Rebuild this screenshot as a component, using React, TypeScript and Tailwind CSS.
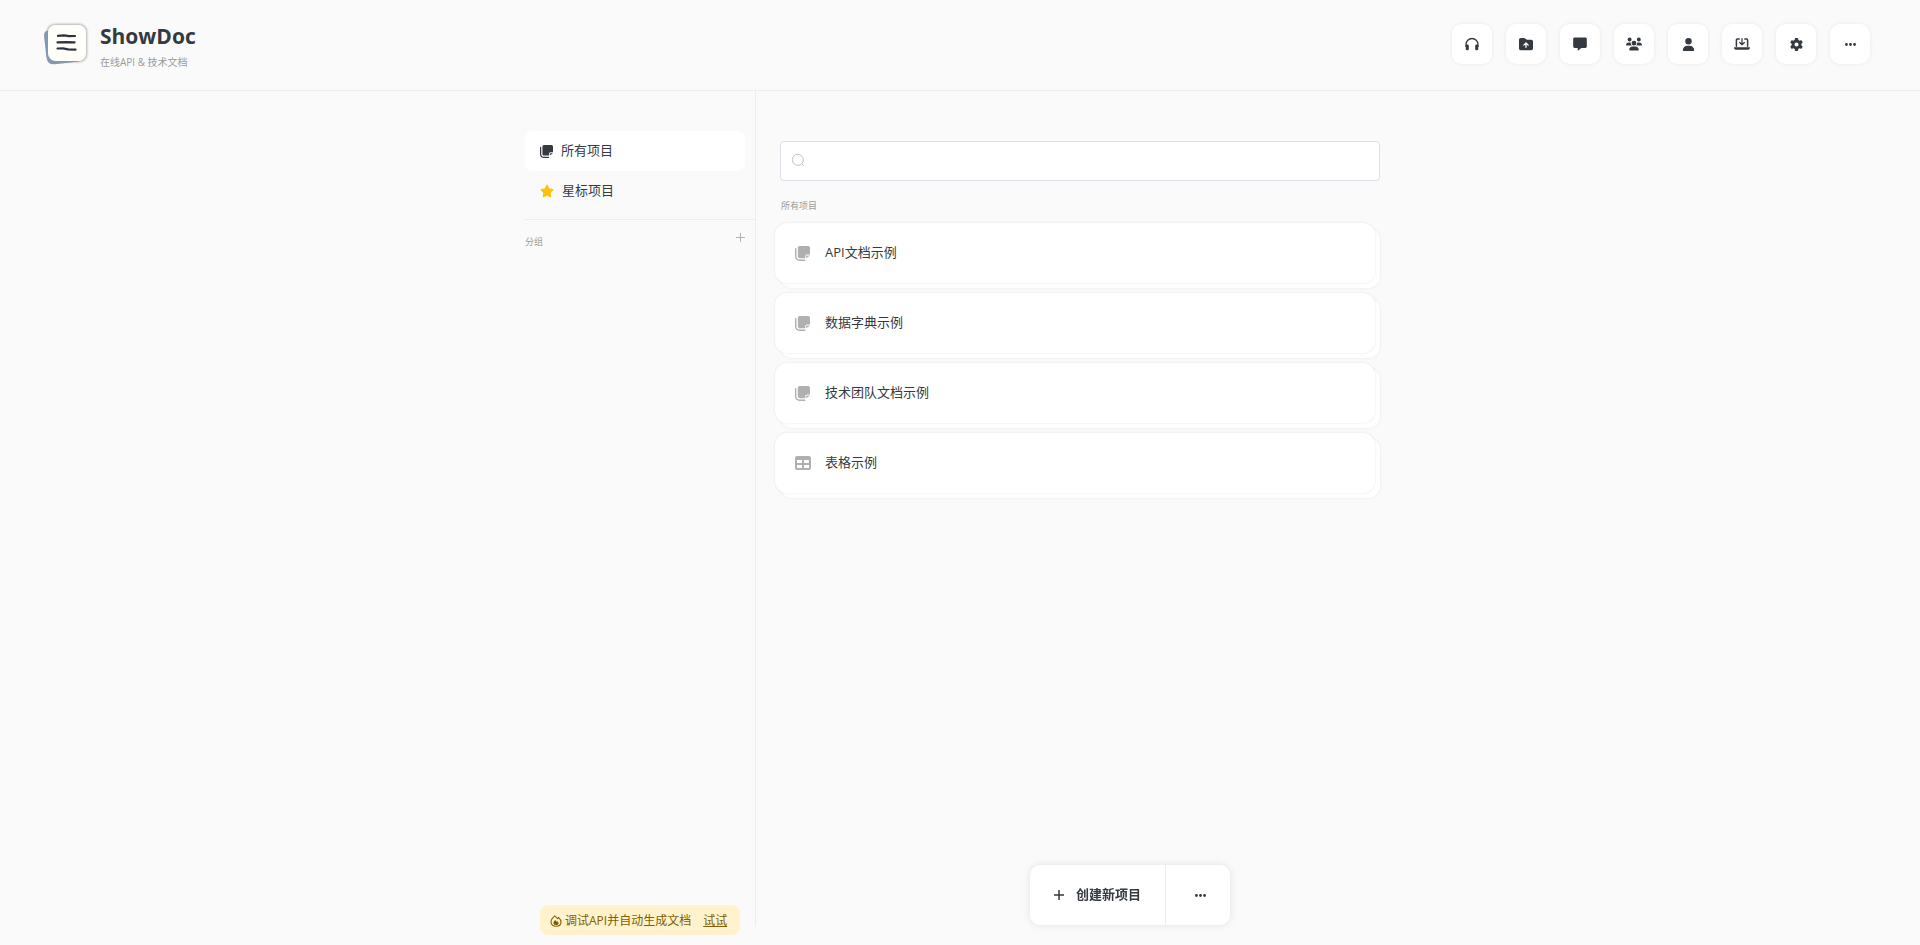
import React, { useState } from 'react';
import { FaEllipsis, FaGear, FaStar, FaTable, FaUser, FaUsers } from 'react-icons/fa6';

interface IconProps {
  className?: string;
}

interface Project {
  id: number;
  name: string;
  type: 'doc' | 'table';
}

const projects: Project[] = [
  { id: 1, name: 'API文档示例', type: 'doc' },
  { id: 2, name: '数据字典示例', type: 'doc' },
  { id: 3, name: '技术团队文档示例', type: 'doc' },
  { id: 4, name: '表格示例', type: 'table' },
];

const Logo: React.FC = () => (
  <svg width="50" height="50" viewBox="0 0 50 50" aria-hidden="true">
    {/* soft edge around the front sheet */}
    <g fill="#000">
      <rect x="5" y="2" width="44" height="42" rx="10" opacity="0.03" />
      <rect x="6" y="3" width="42" height="40" rx="9" opacity="0.06" />
      <rect x="7" y="4" width="40" height="38" rx="8" opacity="0.1" />
    </g>
    <path d="M12 10.500 Q3.500 9.500 4 16 L6.500 37.500 Q7.500 45 15 44.300 L39 41.500 L34 12 Z" fill="#8298b3" />
    <rect x="8" y="5" width="38" height="36" rx="7.500" fill="#fffef8" />
    <g fill="none" stroke="#2d3440" strokeWidth="2.200" strokeLinecap="round" strokeLinejoin="round">
      <path d="M18 15.900 L24 15.400 L29 16.200 L35 16" />
      <path d="M17.500 22.400 L26 22.100 L34.500 22.400" />
      <path d="M17.500 28.500 L23 28.400 L28 29.400 L35.500 29.600" />
    </g>
  </svg>
);

const HeadphonesIcon: React.FC<IconProps> = ({ className }) => (
  <svg viewBox="0 0 14 14" className={className} fill="currentColor" aria-hidden="true">
    <path d="M1 10V7.500a6 6 0 0 1 12 0V10" fill="none" stroke="currentColor" strokeWidth="1.300" />
    <rect x="0.800" y="7.500" width="3" height="5.800" rx="1.200" />
    <rect x="10.200" y="7.500" width="3" height="5.800" rx="1.200" />
  </svg>
);

const FolderUpIcon: React.FC<IconProps> = ({ className }) => (
  <svg viewBox="0 0 512 512" className={className} fill="currentColor" aria-hidden="true">
    <path
      fillRule="evenodd"
      d="M64 32h117c17 0 33 7 45 19l27 26c12 12 28 19 45 19h150c35 0 64 29 64 64v256c0 35-29 64-64 64H64c-35 0-64-29-64-64V96c0-35 29-64 64-64zm216 344V274l39 39c9 9 25 9 34 0s9-25 0-34l-80-80c-9-9-25-9-34 0l-80 80c-9 9-9 25 0 34s25 9 34 0l39-39v102c0 13 11 24 24 24s24-11 24-24z"
    />
  </svg>
);

const MessageIcon: React.FC<IconProps> = ({ className }) => (
  <svg viewBox="0 0 14 14" className={className} fill="currentColor" aria-hidden="true">
    <path d="M1.600.5h10.800c.8 0 1.400.6 1.400 1.400v7.700c0 .8-.6 1.400-1.400 1.400H8.300l-3 2.400c-.3.2-.6 0-.6-.3V11H1.600C.8 11 .2 10.400.2 9.600V1.900C.2 1.100.8.5 1.600.5z" />
  </svg>
);

const LaptopDownIcon: React.FC<IconProps> = ({ className }) => (
  <svg viewBox="0 0 640 512" className={className} fill="none" stroke="currentColor" aria-hidden="true">
    <path d="M96 350V90c0-22 14-36 36-36h76M544 350V90c0-22-14-36-36-36h-76" strokeWidth="60" strokeLinecap="round" />
    <path d="M320 44v230M228 196l92 92 92-92" strokeWidth="50" strokeLinecap="round" strokeLinejoin="round" />
    <path d="M0 390h640v20c0 42-34 76-76 76H76c-42 0-76-34-76-76z" fill="currentColor" stroke="none" />
  </svg>
);

const NotesIcon: React.FC<IconProps> = ({ className }) => (
  <svg viewBox="0 0 512 512" className={className} fill="currentColor" aria-hidden="true">
    <path d="M160 0h288c35 0 64 29 64 64v224h-96c-35 0-64 29-64 64v64H160c-35 0-64-29-64-64V64c0-35 29-64 64-64z" />
    <path d="M512 320 384 416v-64c0-18 14-32 32-32z" />
    <path d="M48 96c0-13-11-24-24-24S0 83 0 96v264c0 84 68 152 152 152h184c13 0 24-11 24-24s-11-24-24-24H152c-57 0-104-47-104-104z" />
  </svg>
);

const FireIcon: React.FC<IconProps> = ({ className }) => (
  <svg viewBox="0 0 24 24" className={className} fill="none" stroke="currentColor" aria-hidden="true">
    <path
      d="M9.500 1.800C12 3.600 13.800 5.600 15 7.400 15.600 6.300 16.400 5.200 17 4.600 20 7.400 22 11 22 14 22 19 17.800 22.600 12 22.600S2 19 2 14C2 9.800 5.600 5.200 9.500 1.800z"
      strokeWidth="2.200"
      strokeLinejoin="round"
    />
    <path
      d="M10.500 10c1.700 1.600 2.600 2.800 3.300 4l1.400-1.600c1.600 1.600 2 2.800 2 4 0 2.400-2.200 3.800-5.200 3.800s-5.200-1.600-5.200-4.200c0-2.200 1.700-4.200 3.700-6z"
      fill="currentColor"
      stroke="none"
    />
  </svg>
);

const SearchIcon: React.FC<IconProps> = ({ className }) => (
  <svg viewBox="0 0 14 14" className={className} fill="none" stroke="currentColor" aria-hidden="true">
    <circle cx="6.800" cy="6.800" r="5.500" />
    <path d="M10.600 10.600 12.800 12.800" />
  </svg>
);

const PlusIcon: React.FC<IconProps> = ({ className }) => (
  <svg viewBox="0 0 10 10" className={className} fill="none" stroke="currentColor" aria-hidden="true">
    <path d="M5 0v10M0 5h10" />
  </svg>
);

const headerActions = [
  { label: '客服', icon: <HeadphonesIcon className="size-3.5" /> },
  { label: '导入', icon: <FolderUpIcon className="size-3.5" /> },
  { label: '消息', icon: <MessageIcon className="size-3.5" /> },
  { label: '团队', icon: <FaUsers className="h-3.5 w-4" /> },
  { label: '用户', icon: <FaUser className="size-[13px]" /> },
  { label: '客户端', icon: <LaptopDownIcon className="h-3.5 w-4" /> },
  { label: '设置', icon: <FaGear className="size-[13px]" /> },
  { label: '更多', icon: <FaEllipsis className="size-[13px]" /> },
];

const Header: React.FC = () => (
  <header className="flex h-[91px] items-center justify-between border-b border-[#ededed] pr-[50px] pl-10">
    <div className="flex items-center gap-2.5">
      <Logo />
      <div className="pt-0.5">
        <h1 className="text-[21px] leading-8 font-bold">ShowDoc</h1>
        <p className="text-[10px] leading-5 text-[#9b9b9b]">在线API &amp; 技术文档</p>
      </div>
    </div>
    <nav className="mb-0.5 flex gap-3.5">
      {headerActions.map((action) => (
        <button
          key={action.label}
          aria-label={action.label}
          className="flex size-10 items-center justify-center rounded-[10px] bg-white shadow-[0_0_4px_rgba(0,0,0,0.07)] hover:bg-gray-50"
        >
          {action.icon}
        </button>
      ))}
    </nav>
  </header>
);

const Sidebar: React.FC = () => (
  <aside className="min-h-[calc(100vh-110px)] w-[231px] shrink-0 border-r border-[#ededed] pt-10">
    <button className="flex h-10 w-[220px] items-center gap-2 rounded-lg bg-white pl-[15px]">
      <NotesIcon className="size-[13px]" />
      <span>所有项目</span>
    </button>
    <button className="flex h-10 w-[220px] items-center gap-2 pl-[15px]">
      <FaStar className="size-3.5 text-[#ffc107]" />
      <span>星标项目</span>
    </button>
    <div className="mt-2 flex items-start justify-between border-t border-[#ededed] pt-3 pr-2.5 text-[#9b9b9b]">
      <span className="mt-1 text-[9px] leading-3">分组</span>
      <button aria-label="新建分组" className="pt-px">
        <PlusIcon className="size-[9px] text-[#aaaaaa]" />
      </button>
    </div>
    <div className="fixed bottom-2.5 ml-[15px] flex h-[30px] w-[200px] items-center rounded-lg bg-[#fff2cc] pt-px pl-2.5 text-xs text-[#7f6000]">
      <FireIcon className="mr-[3px] size-3" />
      <span>调试API并自动生成文档</span>
      <a href="#try" className="ml-3 underline">
        试试
      </a>
    </div>
  </aside>
);

const ProjectCard: React.FC<{ project: Project }> = ({ project }) => (
  <li className="mr-[5px] mb-2.5 rounded-xl bg-white shadow-[0_0_3px_rgba(0,0,0,0.04),5px_5px_0_#fff,5px_5px_3px_rgba(0,0,0,0.08)]">
    <a href="#item" className="flex h-[60px] items-center rounded-xl pl-5 shadow-[0_0_2px_rgba(0,0,0,0.08)]">
      <span className="w-[30px] text-[#b0b0b0]">
        {project.type === 'table' ? <FaTable className="size-4" /> : <NotesIcon className="size-[15px]" />}
      </span>
      <span>{project.name}</span>
    </a>
  </li>
);

export default function App() {
  const [keyword, setKeyword] = useState('');
  const shown = projects.filter((p) => p.name.includes(keyword));

  return (
    <div className="min-h-screen bg-[#fafafa] font-['Open_Sans','Noto_Sans_CJK_SC',sans-serif] text-[13px] text-[#343a40]">
      <Header />
      <div className="mx-auto flex max-w-[870px]">
        <Sidebar />
        <main className="min-w-0 flex-1 pt-[50px] pr-[15px] pl-[19px]">
          <label className="ml-[5px] flex h-10 items-center rounded border border-[#dcdfe6] bg-white px-2.5">
            <SearchIcon className="mb-0.5 size-3.5 text-[#c0c4cc]" />
            <input
              type="text"
              aria-label="搜索项目"
              value={keyword}
              onChange={(e) => setKeyword(e.target.value)}
              className="ml-2 h-full flex-1 outline-none"
            />
          </label>
          <h2 className="mt-[19px] ml-1.5 text-[9px] leading-3 text-[#9b9b9b]">所有项目</h2>
          <ul className="mt-[11px]">
            {shown.map((project) => (
              <ProjectCard key={project.id} project={project} />
            ))}
          </ul>
        </main>
      </div>

      {/* Floating create bar */}
      <div className="fixed bottom-5 left-1/2 ml-[70px] flex h-[60px] w-[200px] rounded-[10px] bg-white shadow-[0_0_8px_rgba(0,0,0,0.1)]">
        <button className="flex flex-1 items-center justify-center gap-3 border-r border-[#ededed] font-bold">
          <PlusIcon className="size-2.5 stroke-[1.5]" />
          <span>创建新项目</span>
        </button>
        <button aria-label="更多操作" className="flex w-16 items-center justify-center pl-1">
          <FaEllipsis className="size-[13px]" />
        </button>
      </div>
    </div>
  );
}
